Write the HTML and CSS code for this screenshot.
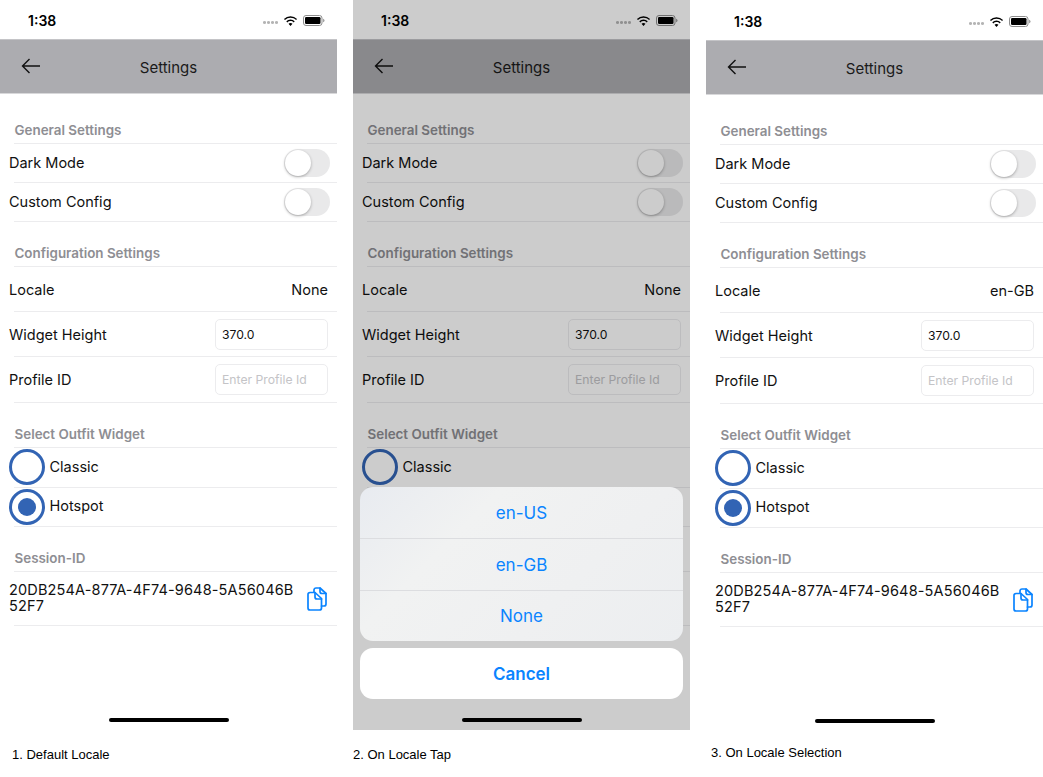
FILE: index.html
```html
<!DOCTYPE html>
<html lang="en">
<head>
<meta charset="utf-8">
<title>Settings</title>
<link rel="stylesheet" href="styles.css">
</head>
<body>
<svg class="sprite" aria-hidden="true">
  <symbol id="wifi" viewBox="0 0 16 12"><path d="M8 2.6c2.3 0 4.4.9 5.9 2.4l1.1-1.2A10 10 0 0 0 8 1 10 10 0 0 0 1 3.8L2.1 5A8.400 8.400 0 0 1 8 2.600zM8 6.100c1.300 0 2.500.5 3.400 1.400l1.100-1.200A6.500 6.500 0 0 0 8 4.500a6.500 6.500 0 0 0-4.500 1.800l1.100 1.200A4.900 4.900 0 0 1 8 6.100zM8 8c-.8 0-1.500.3-2.100.8L8 11.200l2.100-2.400C9.500 8.300 8.800 8 8 8z" fill="#000"/></symbol>
  <symbol id="battery" viewBox="0 0 22 11"><rect x=".5" y=".5" width="18.500" height="10" rx="2.500" fill="none" stroke="#8e8e8e"/><rect x="2" y="2" width="15.500" height="7" rx="1.200" fill="#000"/><path d="M20.200 3.800c.8.200 1.300.9 1.300 1.700s-.5 1.500-1.300 1.700z" fill="#8e8e8e"/></symbol>
  <symbol id="back" viewBox="0 0 20 16"><path d="M19 8H1.500M8.500 1 1.500 8l7 7" fill="none" stroke="currentColor" stroke-width="1.400"/></symbol>
  <symbol id="copy" viewBox="0 0 20 24"><g fill="none" stroke="#0a84ff" stroke-width="1.700" stroke-linejoin="round" stroke-linecap="round"><path d="M7 5V3a2 2 0 0 1 2-2h4l6 5.500V17a2 2 0 0 1-2 2h-2.500"/><path d="M13 1v3.500a2 2 0 0 0 2 2h4"/><path d="M3 5.500h5l6.500 6V21a2 2 0 0 1-2 2H3a2 2 0 0 1-2-2V7.500a2 2 0 0 1 2-2z"/><path d="M8 5.500V10a2 2 0 0 0 2 2h4.500"/></g></symbol>
</svg>
<main class="board">

  <figure class="shot">
    <div class="phone">
      <div class="status"><span class="time">1:38</span><span class="signal"><i></i><i></i><i></i><i></i></span><svg class="wifi"><use href="#wifi"/></svg><svg class="battery"><use href="#battery"/></svg></div>
      <header class="nav"><svg class="back"><use href="#back"/></svg><h1>Settings</h1></header>
      <div class="head head-first">General Settings</div>
      <div class="row row-toggle"><span class="label">Dark Mode</span><span class="switch"></span></div>
      <div class="row row-toggle"><span class="label">Custom Config</span><span class="switch"></span></div>
      <div class="head">Configuration Settings</div>
      <div class="row row-field"><span class="label">Locale</span><span class="value">None</span></div>
      <div class="row row-field"><span class="label">Widget Height</span><span class="input">370.0</span></div>
      <div class="row row-field row-last"><span class="label">Profile ID</span><span class="input input-empty">Enter Profile Id</span></div>
      <div class="head">Select Outfit Widget</div>
      <div class="row row-radio"><span class="radio"></span><span class="label">Classic</span></div>
      <div class="row row-radio"><span class="radio radio-on"></span><span class="label">Hotspot</span></div>
      <div class="head">Session-ID</div>
      <div class="row row-session"><span class="label session">20DB254A-877A-4F74-9648-5A56046B<br>52F7</span><svg class="copy"><use href="#copy"/></svg></div>
      <div class="home"></div>
    </div>
    <figcaption class="caption caption-1">1. Default Locale</figcaption>
  </figure>

  <figure class="shot">
    <div class="phone">
      <div class="status"><span class="time">1:38</span><span class="signal"><i></i><i></i><i></i><i></i></span><svg class="wifi"><use href="#wifi"/></svg><svg class="battery"><use href="#battery"/></svg></div>
      <header class="nav"><svg class="back"><use href="#back"/></svg><h1>Settings</h1></header>
      <div class="head head-first">General Settings</div>
      <div class="row row-toggle"><span class="label">Dark Mode</span><span class="switch"></span></div>
      <div class="row row-toggle"><span class="label">Custom Config</span><span class="switch"></span></div>
      <div class="head">Configuration Settings</div>
      <div class="row row-field"><span class="label">Locale</span><span class="value">None</span></div>
      <div class="row row-field"><span class="label">Widget Height</span><span class="input">370.0</span></div>
      <div class="row row-field row-last"><span class="label">Profile ID</span><span class="input input-empty">Enter Profile Id</span></div>
      <div class="head">Select Outfit Widget</div>
      <div class="row row-radio"><span class="radio"></span><span class="label">Classic</span></div>
      <div class="row row-radio"><span class="radio radio-on"></span><span class="label">Hotspot</span></div>
      <div class="head">Session-ID</div>
      <div class="row row-session"><span class="label session">20DB254A-877A-4F74-9648-5A56046B<br>52F7</span><svg class="copy"><use href="#copy"/></svg></div>
      <div class="scrim"></div>
      <div class="sheet">
        <div class="actions">
          <div class="action">en-US</div>
          <div class="action">en-GB</div>
          <div class="action">None</div>
        </div>
        <div class="cancel">Cancel</div>
      </div>
      <div class="home home-top"></div>
    </div>
    <figcaption class="caption caption-2">2. On Locale Tap</figcaption>
  </figure>

  <figure class="shot shot-low">
    <div class="phone">
      <div class="status"><span class="time">1:38</span><span class="signal"><i></i><i></i><i></i><i></i></span><svg class="wifi"><use href="#wifi"/></svg><svg class="battery"><use href="#battery"/></svg></div>
      <header class="nav"><svg class="back"><use href="#back"/></svg><h1>Settings</h1></header>
      <div class="head head-first">General Settings</div>
      <div class="row row-toggle"><span class="label">Dark Mode</span><span class="switch"></span></div>
      <div class="row row-toggle"><span class="label">Custom Config</span><span class="switch"></span></div>
      <div class="head">Configuration Settings</div>
      <div class="row row-field"><span class="label">Locale</span><span class="value">en-GB</span></div>
      <div class="row row-field"><span class="label">Widget Height</span><span class="input">370.0</span></div>
      <div class="row row-field row-last"><span class="label">Profile ID</span><span class="input input-empty">Enter Profile Id</span></div>
      <div class="head">Select Outfit Widget</div>
      <div class="row row-radio"><span class="radio"></span><span class="label">Classic</span></div>
      <div class="row row-radio"><span class="radio radio-on"></span><span class="label">Hotspot</span></div>
      <div class="head">Session-ID</div>
      <div class="row row-session"><span class="label session">20DB254A-877A-4F74-9648-5A56046B<br>52F7</span><svg class="copy"><use href="#copy"/></svg></div>
      <div class="home"></div>
    </div>
    <figcaption class="caption caption-3">3. On Locale Selection</figcaption>
  </figure>

</main>
</body>
</html>
```

FILE: styles.css
```css
* { box-sizing: border-box; }

html, body {
  margin: 0;
  background: #fff;
}

body {
  font-family: Inter, "Liberation Sans", sans-serif;
  color: #111;
  overflow: hidden;
}

.sprite {
  position: absolute;
  width: 0;
  height: 0;
}

.board {
  display: flex;
  gap: 16px;
  width: 1043px;
}

.shot {
  margin: 0;
  width: 337px;
  flex: none;
}

.shot-low {
  margin-top: 1px;
}

.phone {
  position: relative;
  height: 730px;
  overflow: hidden;
  background: #fff;
}

.status {
  height: 39px;
  display: flex;
  align-items: center;
  padding: 2px 0 0 28px;
}

.time {
  font-size: 14px;
  font-weight: 600;
  margin-right: auto;
  color: #000;
}

.signal {
  display: flex;
  gap: 1px;
  margin-right: 5px;
  padding-top: 4px;
}

.signal i {
  width: 3px;
  height: 2.500px;
  border-radius: 50%;
  background: #b4b4b4;
}

.wifi {
  width: 15px;
  height: 12px;
  margin-right: 5px;
}

.battery {
  width: 22px;
  height: 11px;
  margin-right: 12px;
}

.nav {
  position: relative;
  height: 55px;
  padding-top: 1px;
  background: #acacb0;
  border-top: 1px solid #c4c4c7;
  border-bottom: 1px solid #d8d8da;
  display: flex;
  align-items: center;
  justify-content: center;
}

.nav h1 {
  margin: 0;
  font-size: 15px;
  font-weight: 400;
  color: #1a1a1a;
}

.back {
  position: absolute;
  left: 21px;
  top: 18px;
  width: 20px;
  height: 16px;
  color: #111;
}

.head {
  height: 45px;
  margin-left: 14px;
  display: flex;
  align-items: flex-end;
  padding: 0 0 5px 0.500px;
  font-size: 13.400px;
  font-weight: 600;
  color: #8e8e93;
  border-bottom: 1px solid #ececee;
}

.head-first {
  height: 50px;
}

.row {
  margin-left: 14px;
  border-bottom: 1px solid #ececee;
  display: flex;
  align-items: center;
  justify-content: space-between;
}

.row-toggle {
  height: 39px;
  padding-right: 7px;
}

.row-field {
  height: 45px;
  padding-right: 9px;
}

.row-last {
  height: 46px;
}

.row-radio {
  height: 39.500px;
  justify-content: flex-start;
  gap: 5px;
}

.row-session {
  height: 54px;
  padding-right: 10px;
}

.label {
  margin-left: -5px;
  font-size: 14.500px;
}

.row-toggle .label,
.row-radio .label {
  margin-bottom: 2px;
}

.row-radio .label {
  margin-left: -0.500px;
}

.session {
  line-height: 16px;
  letter-spacing: .16px;
  margin-bottom: 2px;
}

.value {
  font-size: 14.500px;
}

.switch {
  position: relative;
  width: 46px;
  height: 28px;
  border-radius: 14px;
  background: #e9e9ea;
}

.switch::after {
  content: "";
  position: absolute;
  left: 1px;
  top: 1px;
  width: 26px;
  height: 26px;
  border-radius: 50%;
  background: #fff;
  box-shadow: 0 1px 3px rgba(0, 0, 0, .3);
}

.input {
  width: 113px;
  height: 31px;
  display: flex;
  align-items: center;
  padding-left: 6px;
  border: 1px solid #ececee;
  border-radius: 5px;
  font-size: 12.200px;
}

.input-empty {
  color: #c4c4c7;
}

.radio {
  flex: none;
  margin-left: -5px;
  width: 36px;
  height: 36px;
  border: 3.500px solid #3264b4;
  border-radius: 50%;
  display: flex;
  align-items: center;
  justify-content: center;
}

.radio-on::after {
  content: "";
  width: 18px;
  height: 18px;
  border-radius: 50%;
  background: #3264b4;
}

.copy {
  width: 20px;
  height: 24px;
}

.home {
  position: absolute;
  left: 109px;
  top: 718px;
  width: 120px;
  height: 4px;
  border-radius: 2px;
  background: #000;
}

.scrim {
  position: absolute;
  inset: 0;
  background: rgba(0, 0, 0, .2);
}

.sheet {
  position: absolute;
  left: 7px;
  top: 487px;
  width: 323px;
  display: flex;
  flex-direction: column;
  gap: 7px;
}

.actions {
  border-radius: 13px;
  overflow: hidden;
  background: linear-gradient(135deg, #e8ebf0 0%, #f1f2f2 30%, #eff0f1 65%, #eceef0 100%);
}

.action {
  height: 52px;
  display: flex;
  align-items: center;
  justify-content: center;
  font-size: 17px;
  color: #0a84ff;
  border-bottom: 1px solid #dcdde0;
}

.action:last-child {
  height: 50px;
  border-bottom: 0;
}

.cancel {
  height: 51px;
  display: flex;
  align-items: center;
  justify-content: center;
  border-radius: 13px;
  background: #fff;
  font-size: 17px;
  font-weight: 600;
  color: #0a84ff;
}

.caption {
  font-family: "Liberation Sans", sans-serif;
  font-size: 13px;
  line-height: 14px;
  color: #000;
}

.caption-1 { padding: 18px 0 0 12px; }
.caption-2 { padding: 18px 0 0 0; }
.caption-3 { padding: 15px 0 0 5px; }
```
